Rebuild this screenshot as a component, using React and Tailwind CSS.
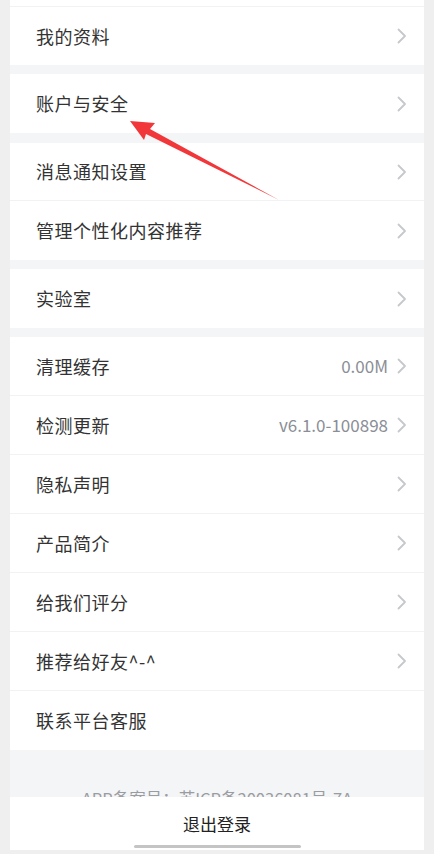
import React from "react";

const Chevron = () => (
  <svg width="10" height="16" viewBox="0 0 10 16" className="shrink-0">
    <path d="M1.5 1.5 L8 8 L1.5 14.5" fill="none" stroke="#c6c8cc" strokeWidth="1.8" strokeLinecap="round" strokeLinejoin="round" />
  </svg>
);

const Row = ({ label, value, arrow = true, last = false, h = "h-[59px]" }) => (
  <div className={`flex items-center justify-between pl-[26px] pr-[17px] bg-white ${h} ${last ? "" : "border-b border-[#f1f2f4]"}`}>
    <span className="text-[18px] tracking-[0.5px] text-[#333333]">{label}</span>
    <div className="flex items-center gap-[9px]">
      {value && <span className="text-[17px] text-[#8a8e96]">{value}</span>}
      {arrow && <Chevron />}
    </div>
  </div>
);

const Gap = ({ h }) => <div className={`bg-[#f4f5f7] ${h}`} />;

export default function App() {
  return (
    <div
      className="relative w-[434px] h-[854px] overflow-hidden bg-[#efefef] px-[10px]"
      style={{ fontFamily: '"Noto Sans CJK SC", "Noto Sans", sans-serif' }}
    >
      <div className="flex flex-col bg-white">
        <div className="h-[7px] border-b border-[#f1f2f4]" />
        <Row label="我的资料" last h="h-[58px]" />
        <Gap h="h-[9px]" />
        <Row label="账户与安全" last />
        <Gap h="h-[10px]" />
        <Row label="消息通知设置" h="h-[58px]" />
        <Row label="管理个性化内容推荐" last />
        <Gap h="h-[9px]" />
        <Row label="实验室" last />
        <Gap h="h-[9px]" />
        <Row label="清理缓存" value="0.00M" />
        <Row label="检测更新" value="v6.1.0-100898" />
        <Row label="隐私声明" />
        <Row label="产品简介" />
        <Row label="给我们评分" />
        <Row label="推荐给好友^-^" />
        <Row label="联系平台客服" arrow={false} last />
        <div className="h-[47px] overflow-hidden bg-[#f4f5f7] flex justify-center">
          <span className="mt-[37px] text-[16.5px] leading-[22px] text-[#9a9ca1]">APP备案号：苏ICP备20036081号-7A</span>
        </div>
        <div className="h-[53px] bg-white flex flex-col items-center">
          <span className="mt-[16px] text-[17px] leading-[22px] text-[#222222]">退出登录</span>
          <div className="mt-auto mb-[2px] w-[167px] h-[3px] rounded-full bg-[#c4c4c4]" />
        </div>
      </div>
      <svg className="absolute left-0 top-0 pointer-events-none" width="434" height="854">
        <polygon points="130,121 155,123 150,129 279,200 146,134 144,140" fill="#f2373a" />
      </svg>
    </div>
  );
}
